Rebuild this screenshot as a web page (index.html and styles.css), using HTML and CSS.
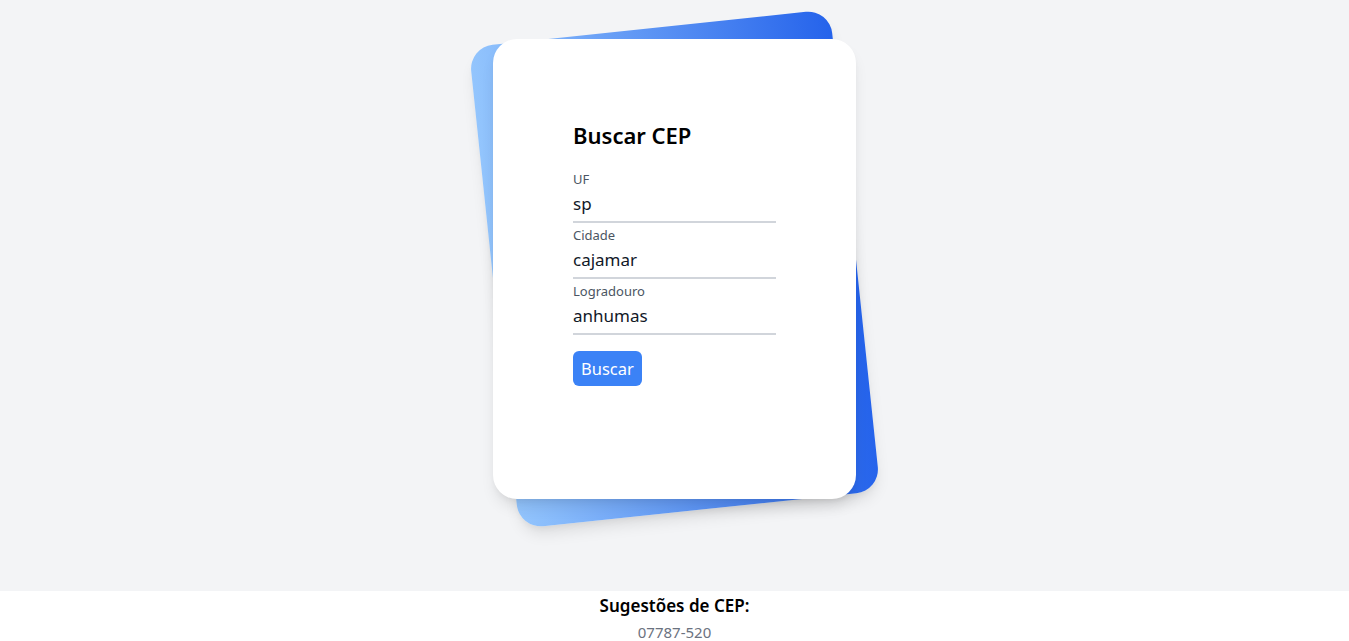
FILE: index.html
```
<!DOCTYPE html>
<html lang="pt-BR">
<head>
<meta charset="utf-8">
<title>Buscar CEP</title>
<link rel="stylesheet" href="styles.css">
</head>
<body>
<main class="stage">
  <div class="card-wrap">
    <div class="card-back"></div>
    <div class="card">
      <form class="form">
        <h1 class="title">Buscar CEP</h1>
        <div class="field">
          <label class="label" for="uf">UF</label>
          <input class="input" id="uf" type="text" value="sp">
        </div>
        <div class="field">
          <label class="label" for="cidade">Cidade</label>
          <input class="input" id="cidade" type="text" value="cajamar">
        </div>
        <div class="field">
          <label class="label" for="logradouro">Logradouro</label>
          <input class="input" id="logradouro" type="text" value="anhumas">
        </div>
        <button class="btn" type="button">Buscar</button>
      </form>
    </div>
  </div>
</main>
<section class="suggestions">
  <h2 class="sugg-title">Sugestões de CEP:</h2>
  <p class="sugg-item">07787-520</p>
</section>
</body>
</html>
```
FILE: styles.css
```
* { box-sizing: border-box; }
html, body {
  margin: 0;
  padding: 0;
  background: #fff;
  font-family: "Noto Sans", "Open Sans", "DejaVu Sans", sans-serif;
  color: #000;
}
.stage {
  background: #f3f4f6;
  padding: 27px 0 80px;
  display: flex;
  justify-content: center;
}
.card-wrap {
  position: relative;
  width: 363px;
  padding: 12px 0;
}
.card-back {
  position: absolute;
  inset: 0;
  border-radius: 24px;
  background: linear-gradient(to right, #93c5fd, #2563eb);
  box-shadow: 0 10px 15px -3px rgba(0,0,0,0.1), 0 4px 6px -2px rgba(0,0,0,0.05);
  transform: rotate(-6deg);
}
.card {
  position: relative;
  background: #fff;
  border-radius: 24px;
  padding: 80px;
  box-shadow: 0 10px 15px -3px rgba(0,0,0,0.1), 0 4px 6px -2px rgba(0,0,0,0.05);
}
.form {
  display: flex;
  flex-direction: column;
  align-items: flex-start;
  padding-bottom: 33px;
}
.title {
  margin: 0 0 18px;
  font-size: 22px;
  line-height: 32px;
  font-weight: 600;
}
.field {
  width: 100%;
  display: flex;
  flex-direction: column;
  margin-bottom: 2px;
}
.label {
  font-size: 13px;
  line-height: 20px;
  color: #4b5563;
}
.input {
  width: 100%;
  height: 34px;
  border: 0;
  border-bottom: 2px solid #d1d5db;
  padding: 0 0 4px;
  font-family: inherit;
  font-size: 17px;
  line-height: 28px;
  color: #111827;
  background: transparent;
  outline: none;
}
.btn {
  margin-top: 14px;
  background: #3b82f6;
  color: #fff;
  border: 0;
  border-radius: 6px;
  padding: 4px 8px;
  font-family: inherit;
  font-size: 16.5px;
  line-height: 27px;
}
.suggestions {
  text-align: center;
  padding: 1px 0 8px;
}
.sugg-title {
  margin: 0;
  font-size: 17px;
  line-height: 28px;
  font-weight: 600;
}
.sugg-item {
  margin: 0;
  font-size: 15px;
  line-height: 24px;
  color: #6b7280;
}
```
